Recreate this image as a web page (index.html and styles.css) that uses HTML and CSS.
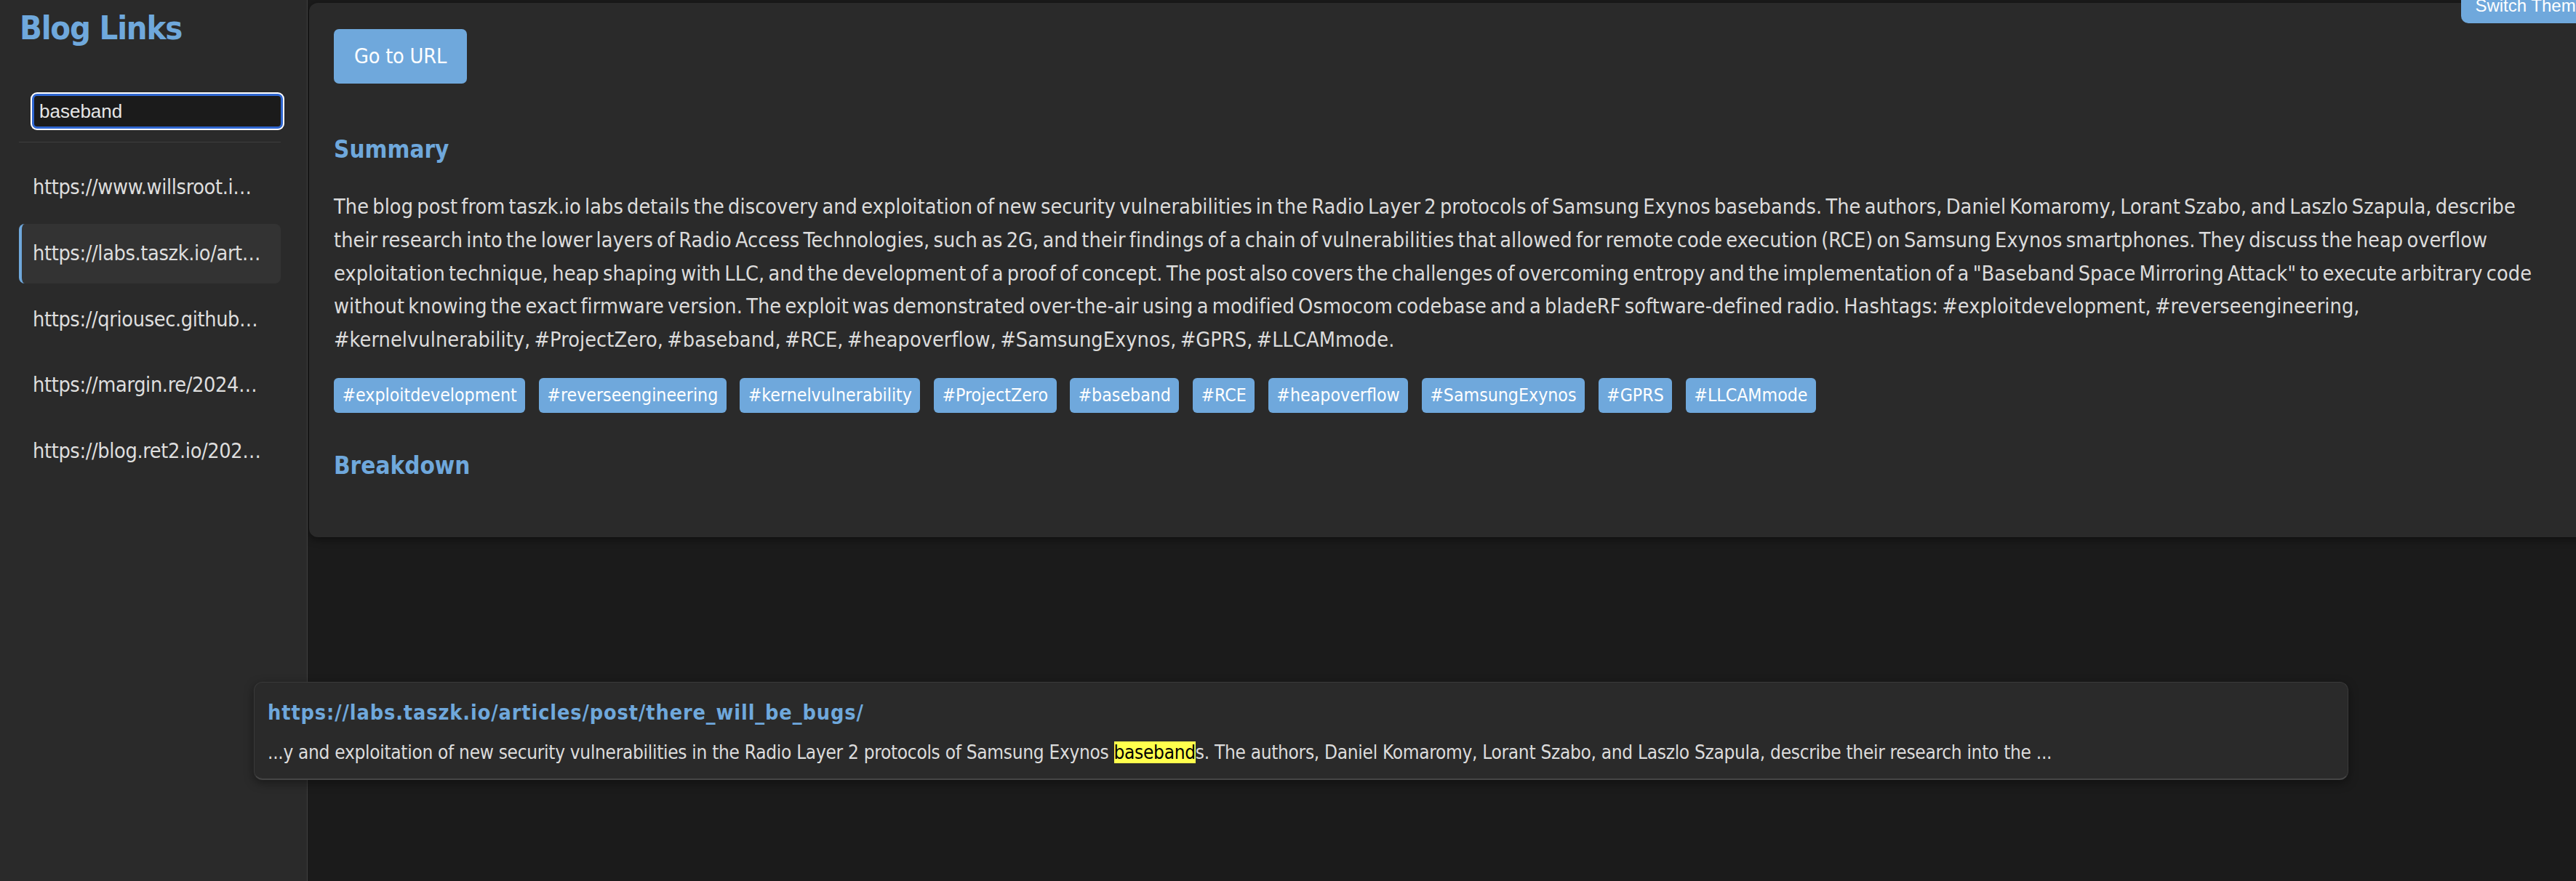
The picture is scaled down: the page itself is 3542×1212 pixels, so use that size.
FILE: index.html
```html
<!DOCTYPE html>
<html lang="en">
<head>
<meta charset="utf-8">
<title>Blog Links</title>
<link rel="stylesheet" href="styles.css">
</head>
<body>
<div class="app">
  <aside class="sidebar">
    <h1 class="brand">Blog Links</h1>
    <input class="search" type="text" value="baseband">
    <hr class="divider">
    <ul class="links">
      <li class="link">https://www.willsroot.io/2024/08/bypassing-kaslr.html</li>
      <li class="link active">https://labs.taszk.io/articles/post/there_will_be_bugs/</li>
      <li class="link">https://qriousec.github.io/post/vbox-escape/</li>
      <li class="link">https://margin.re/2024/07/exploiting-the-basebands/</li>
      <li class="link">https://blog.ret2.io/2024/07/17/pwn2own-auto-2024/</li>
    </ul>
  </aside>
  <main class="main">
    <section class="card">
      <button class="go-btn">Go to URL</button>
      <h2 class="section-title summary-title">Summary</h2>
      <p class="summary">The blog post from taszk.io labs details the discovery and exploitation of new security vulnerabilities in the Radio Layer 2 protocols of Samsung Exynos basebands. The authors, Daniel Komaromy, Lorant Szabo, and Laszlo Szapula, describe their research into the lower layers of Radio Access Technologies, such as 2G, and their findings of a chain of vulnerabilities that allowed for remote code execution (RCE) on Samsung Exynos smartphones. They discuss the heap overflow exploitation technique, heap shaping with LLC, and the development of a proof of concept. The post also covers the challenges of overcoming entropy and the implementation of a "Baseband Space Mirroring Attack" to execute arbitrary code without knowing the exact firmware version. The exploit was demonstrated over-the-air using a modified Osmocom codebase and a bladeRF software-defined radio. Hashtags: #exploitdevelopment, #reverseengineering, #kernelvulnerability, #ProjectZero, #baseband, #RCE, #heapoverflow, #SamsungExynos, #GPRS, #LLCAMmode.</p>
      <div class="tags">
        <span class="tag">#exploitdevelopment</span>
        <span class="tag">#reverseengineering</span>
        <span class="tag">#kernelvulnerability</span>
        <span class="tag">#ProjectZero</span>
        <span class="tag">#baseband</span>
        <span class="tag">#RCE</span>
        <span class="tag">#heapoverflow</span>
        <span class="tag">#SamsungExynos</span>
        <span class="tag">#GPRS</span>
        <span class="tag">#LLCAMmode</span>
      </div>
      <h2 class="section-title breakdown-title">Breakdown</h2>
    </section>
  </main>
</div>
<button class="theme-btn">Switch Theme</button>
<div class="search-popup">
  <a class="popup-link" href="#">https://labs.taszk.io/articles/post/there_will_be_bugs/</a>
  <p class="popup-snippet">...y and exploitation of new security vulnerabilities in the Radio Layer 2 protocols of Samsung Exynos <mark class="hit">baseband</mark>s. The authors, Daniel Komaromy, Lorant Szabo, and Laszlo Szapula, describe their research into the ...</p>
</div>
</body>
</html>
```
FILE: styles.css
```css
html, body {
  margin: 0;
  padding: 0;
  height: 100%;
}
body {
  background: #1b1b1b;
  color: #dcdcdc;
  font-family: "DejaVu Sans Condensed", "DejaVu Sans", sans-serif;
  font-size: 28.6px;
  letter-spacing: -0.36px;
  overflow: hidden;
  position: relative;
}
.app {
  display: flex;
  height: 100vh;
}
.sidebar {
  box-sizing: border-box;
  width: 423px;
  flex-shrink: 0;
  background: #2a2a2a;
  border-right: 1px solid #3e3e3e;
  padding: 12px 36px 0 26px;
  display: flex;
  flex-direction: column;
}
.brand {
  margin: 0;
  font-size: 45px;
  line-height: 54px;
  font-weight: bold;
  letter-spacing: -1.2px;
  color: #6fa8dc;
  padding-left: 1px;
}
.search {
  box-sizing: border-box;
  width: 345px;
  height: 48px;
  margin: 63px 0 0 18px;
  padding: 0 7px;
  background: #1b1b1b;
  color: #e6e6e6;
  border: 3px solid #2f66d0;
  border-radius: 7px;
  box-shadow: 0 0 0 2px #ffffff;
  outline: none;
  font-family: "Liberation Sans", Arial, sans-serif;
  font-size: 26px;
  letter-spacing: 0;
}
.divider {
  width: 360px;
  margin: 18px 0 0 0;
  border: 0;
  border-top: 1px solid #3d3d3d;
  height: 0;
}
.links {
  list-style: none;
  margin: 21px 0 0 0;
  padding: 0;
  display: flex;
  flex-direction: column;
  gap: 9px;
}
.link {
  box-sizing: border-box;
  width: 360px;
  padding: 18px 25px 18px 15px;
  line-height: 45.76px;
  border-left: 4px solid transparent;
  border-radius: 8px;
  white-space: nowrap;
  overflow: hidden;
  text-overflow: ellipsis;
  color: #dedede;
}
.link.active {
  background: #333333;
  border-left-color: #6fa8dc;
}
.main {
  flex: 1;
  min-width: 0;
  overflow: hidden;
}
.card {
  box-sizing: border-box;
  width: 3145px;
  margin: 4px 0 0 2px;
  padding: 36px 65px 78px 34px;
  background: #2a2a2a;
  border-radius: 12px;
  box-shadow: 0 3px 12px rgba(0, 0, 0, 0.45);
  display: flex;
  flex-direction: column;
  align-items: flex-start;
}
.go-btn {
  font-family: inherit;
  font-size: 28.6px;
  letter-spacing: -0.2px;
  line-height: 35px;
  padding: 20px 28px;
  background: #6fa8dc;
  color: #ffffff;
  border: 0;
  border-radius: 7px;
}
.section-title {
  margin: 0;
  font-size: 33px;
  line-height: 40px;
  font-weight: bold;
  letter-spacing: 0;
  color: #6fa8dc;
}
.summary-title {
  margin-top: 71px;
}
.summary {
  margin: 36px 0 0 0;
  line-height: 45.76px;
  letter-spacing: 0.06px;
  word-spacing: -3px;
  color: #dcdcdc;
}
.tags {
  display: flex;
  flex-wrap: wrap;
  gap: 18.5px;
  margin-top: 29px;
}
.tag {
  background: #6fa8dc;
  color: #ffffff;
  font-size: 24.7px;
  letter-spacing: 0;
  line-height: 40px;
  padding: 4px 11.5px;
  border-radius: 6px;
}
.breakdown-title {
  margin-top: 53px;
}
.theme-btn {
  position: absolute;
  top: -16px;
  right: -32px;
  padding: 10px 19px;
  font-family: "Liberation Sans", Arial, sans-serif;
  font-size: 24px;
  letter-spacing: 0;
  background: #6fa8dc;
  color: #ffffff;
  border: 0;
  border-radius: 10px;
}
.search-popup {
  position: absolute;
  left: 349px;
  top: 938px;
  box-sizing: border-box;
  width: 2880px;
  height: 135px;
  padding: 21px 18px 0 18px;
  background: #2a2a2a;
  border: 1px solid #3a3a3a;
  border-bottom: 2px solid #464646;
  border-radius: 12px;
  box-shadow: 0 4px 14px rgba(0, 0, 0, 0.4);
}
.popup-link {
  display: block;
  font-weight: bold;
  font-size: 28.6px;
  letter-spacing: 0.88px;
  line-height: 40px;
  color: #6fa8dc;
  text-decoration: none;
}
.popup-snippet {
  margin: 15px 0 0 0;
  font-size: 26px;
  letter-spacing: -0.3px;
  line-height: 40px;
  color: #dcdcdc;
  white-space: nowrap;
}
.hit {
  background: #ffff4d;
  color: #000000;
}
```
